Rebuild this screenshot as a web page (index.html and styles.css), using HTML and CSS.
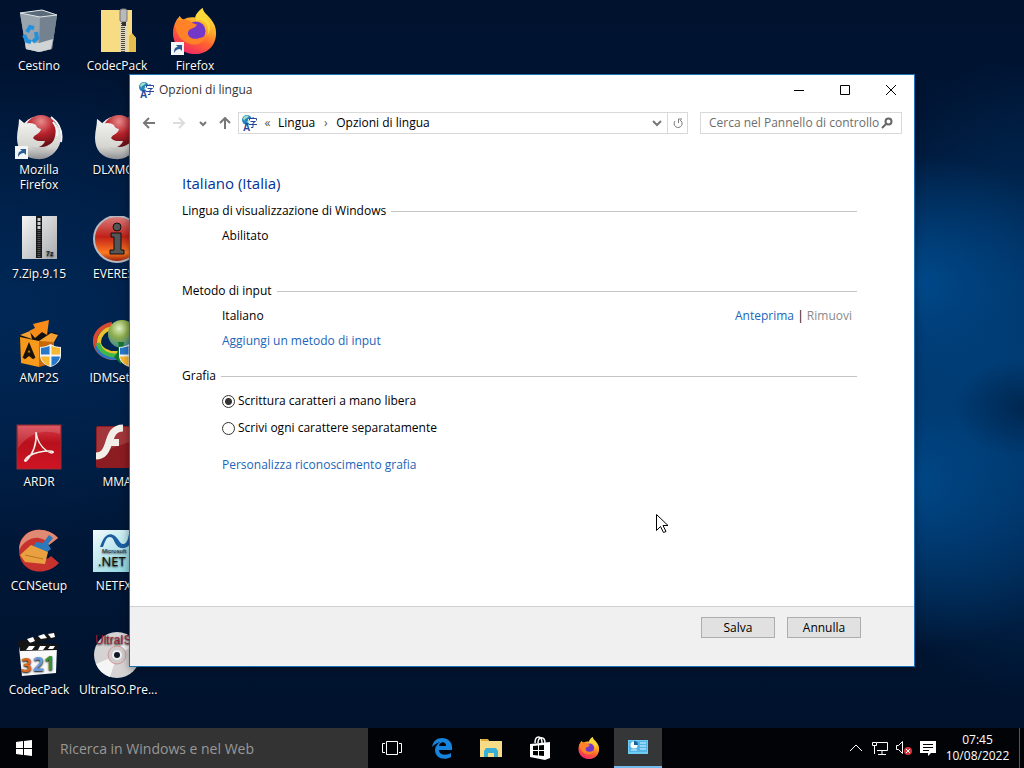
FILE: index.html
```html
<!DOCTYPE html>
<html lang="it">

<head>
    <meta charset="UTF-8">
    <meta name="viewport" content="width=device-width, initial-scale=1.0">
    <title>Opzioni di lingua</title>
    <link rel="stylesheet" href="styles.css">
</head>

<body>
    <!-- shared icons -->
    <svg class="defs" aria-hidden="true">
        <defs>
            <linearGradient id="fox" x1="0.8" y1="0" x2="0.3" y2="1">
                <stop offset="0" stop-color="#fff04a" />
                <stop offset="0.35" stop-color="#ffb02a" />
                <stop offset="0.65" stop-color="#ff6030" />
                <stop offset="1" stop-color="#f0246a" />
            </linearGradient>
            <linearGradient id="silver" x1="0" y1="0" x2="0" y2="1">
                <stop offset="0" stop-color="#f4f4f2" />
                <stop offset="0.7" stop-color="#d4d4d0" />
                <stop offset="1" stop-color="#8e9094" />
            </linearGradient>
            <radialGradient id="redball" cx="0.5" cy="0.2" r="0.8">
                <stop offset="0" stop-color="#e88a8a" />
                <stop offset="0.5" stop-color="#b8222c" />
                <stop offset="1" stop-color="#5e0c12" />
            </radialGradient>
            <linearGradient id="red" x1="0" y1="0" x2="0" y2="1">
                <stop offset="0" stop-color="#d8404c" />
                <stop offset="0.4" stop-color="#b8101c" />
                <stop offset="1" stop-color="#d01424" />
            </linearGradient>
            <linearGradient id="steel" x1="0" y1="0" x2="1" y2="1">
                <stop offset="0" stop-color="#f4f4f4" />
                <stop offset="1" stop-color="#a9adb0" />
            </linearGradient>
            <linearGradient id="fire" x1="0" y1="0" x2="0" y2="1">
                <stop offset="0" stop-color="#d98080" />
                <stop offset="0.45" stop-color="#c02018" />
                <stop offset="0.8" stop-color="#ff7a20" />
                <stop offset="1" stop-color="#8a1408" />
            </linearGradient>
            <radialGradient id="globe" cx="0.4" cy="0.3" r="0.8">
                <stop offset="0" stop-color="#dff0c8" />
                <stop offset="0.4" stop-color="#8fae4a" />
                <stop offset="1" stop-color="#2a7fb4" />
            </radialGradient>
            <linearGradient id="net" x1="0" y1="0" x2="1" y2="1">
                <stop offset="0" stop-color="#f2fbfc" />
                <stop offset="1" stop-color="#7fd0dc" />
            </linearGradient>
            <symbol id="i-firefox" viewBox="0 0 48 48">
                <path d="M5 12c1-1 2-2 3-4 1 2 2 3 4 4 4-2 8-3 12-2 1-4 4-7 8-10 1 5 5 7 8 11 4 5 6 9 6 15 0 13-9 22-22 22S1 39 1 26c0-6 2-10 4-14z" fill="url(#fox)" />
                <circle cx="25" cy="24" r="10" fill="#7438c8" />
                <path d="M3 16c4-4 10-5 14-3 3 1 5 4 9 4-1 4-5 4-8 6-3 3-1 8 4 9 6 1 9-3 13-1-3 5-8 8-14 7C10 36 4 28 3 16z" fill="#ff8228" />
                <path d="M25 14c3-2 5-2 8 0 5 3 6 9 4 15 4-7 3-13-1-18-3-3-5-6-4-11-6 4-8 9-7 14z" fill="#ffd93a" />
            </symbol>
            <!-- old Firefox: silver fox round a red ball -->
            <symbol id="i-mozilla" viewBox="0 0 48 48">
                <circle cx="25" cy="25" r="21" fill="url(#silver)" />
                <circle cx="26" cy="19" r="16" fill="url(#redball)" />
                <path d="M4 7c2 1 4 3 6 5 4-2 8-1 11 1 1 3 2 3 5 4-1 5-6 5-8 9 3 4 8 3 12 3-2 6-9 8-15 5 4 5 12 5 18 1 6-4 9-12 7-22 4 7 6 15 3 22-4 9-13 13-22 12C9 46 2 38 2 26 2 19 4 14 4 7z" fill="url(#silver)" />
                <path d="M36 5c8 6 12 14 10 25M38 10c3 4 5 9 4 14" fill="none" stroke="#f6f6f6" stroke-width="2" />
            </symbol>
            <symbol id="i-shortcut" viewBox="0 0 13 13">
                <path d="M0 0h13v13H0z" fill="#f2f4f6" />
                <path d="M3 11c0-4 1-6 4-6L5 3h6v6L9 7c-3 0-4 1-6 4z" fill="#2b5b94" />
            </symbol>
            <symbol id="i-shield" viewBox="0 0 22 24">
                <path d="M11 0c3 2 7 3 11 3v9c0 6-5 10-11 12C5 22 0 18 0 12V3c4 0 8-1 11-3z" fill="#f5f5f5" />
                <path d="M10 2v9H1V4c3 0 6-1 9-2zM12 13h9c-1 5-4 8-9 10z" fill="#2878c8" />
                <path d="M12 2c3 1 6 2 9 2v7h-9zM1 13h9v10c-5-2-8-5-9-10z" fill="#f8b830" />
            </symbol>
            <symbol id="i-lang" viewBox="0 0 16 16">
                <circle cx="6" cy="5" r="5" fill="#2585bd" />
                <path d="M2 3c2-3 5-3 6-2L6 3 4 4 3 6zM6 6l3-1v3H7z" fill="#a5dfc4" />
                <path d="M7 4h9v8H9z" fill="#fff" />
                <text x="2" y="16" font-family="Liberation Sans" font-size="10" font-weight="bold" fill="#26479a">A</text>
                <path d="M8.5 5.500V3.500h7v2M12 2v1.500M9.500 6.500h5L12 8v4.500h-2M8 9.500h8" fill="none" stroke="#26479a" />
            </symbol>
        </defs>
    </svg>

    <main class="desktop">
        <ul class="icons">
            <li>
                <svg viewBox="0 0 48 48">
                    <path d="M5 5l22-3 15 5-5 34-12 3-14-3z" fill="#8a98a4" />
                    <path d="M5 5l20 4-1 35-13-3z" fill="#98a4ae" />
                    <path d="M25 9l17-2-5 34-13 3z" fill="#74828f" />
                    <path d="M10 33l14 2 14-4-2 10-12 3-13-3z" fill="#d0d4d5" />
                    <path d="M5 5l22-3 15 5-17 2z" fill="#5a6a78" stroke="#dfe5e8" />
                    <path d="M12 24l3-5 4 1M9 27l3 6 4 1M21 24l1 6-4 4" fill="none" stroke="#2490dc" stroke-width="4" />
                </svg>
                <span>Cestino</span>
            </li>
            <li>
                <svg viewBox="0 0 48 48">
                    <path d="M8 2h31v24l4 4v14H8z" fill="#f8dc84" />
                    <path d="M36 44V28l3-3 4 5v14z" fill="#e6bd50" />
                    <path d="M27 2h7v42h-7z" fill="#e0d6b8" />
                    <path d="M30 15v29" stroke="#4d4a44" stroke-width="4" stroke-dasharray="1 1" />
                    <rect x="27" y="1" width="7" height="13" rx="2" fill="#b9b9b9" stroke="#777" />
                    <path d="M29 14h4v4h-4z" fill="#333" />
                </svg>
                <span>CodecPack</span>
            </li>
            <li>
                <svg viewBox="0 0 48 48"><use href="#i-firefox" width="46" height="46" x="1" /><use href="#i-shortcut" x="0" y="34" width="13" height="13" /></svg>
                <span>Firefox</span>
            </li>
            <li>
                <svg viewBox="0 0 48 48"><use href="#i-mozilla" width="48" height="48" /><use href="#i-shortcut" x="0" y="34" width="13" height="13" /></svg>
                <span>Mozilla Firefox</span>
            </li>
            <li>
                <svg viewBox="0 0 48 48"><use href="#i-mozilla" width="48" height="48" /></svg>
                <span>DLXMOZ</span>
            </li>
            <li class="empty"></li>
            <li>
                <svg viewBox="0 0 48 48">
                    <path d="M7 0h35v43H7z" fill="url(#steel)" />
                    <path d="M21 0h6v42h-6z" fill="#181818" />
                    <path d="M24 14v27" stroke="#555" stroke-width="3" stroke-dasharray="1 1" />
                    <path d="M24 2v12" stroke="#ccc" stroke-width="3" stroke-dasharray="3 1" />
                    <text x="31" y="40" font-family="Liberation Sans" font-size="7" font-weight="bold" fill="#222">7z</text>
                </svg>
                <span>7.Zip.9.15</span>
            </li>
            <li>
                <svg viewBox="0 0 48 48">
                    <circle cx="24" cy="23" r="23" fill="url(#fire)" stroke="#b8b8c0" stroke-width="2" />
                    <circle cx="24" cy="11" r="4" fill="#555" stroke="#111" />
                    <path d="M18 17h10v17h3v4H17v-4h4V21h-3z" fill="#555" stroke="#111" />
                </svg>
                <span>EVEREST</span>
            </li>
            <li class="empty"></li>
            <li>
                <svg viewBox="0 0 48 48">
                    <path d="M5 15l8-3 29 1-4 8 2 22-16 4-18-5z" fill="#111" />
                    <path d="M5 17l19 4v26L6 43z" fill="#f79a1c" />
                    <path d="M24 21l15-4v26l-15 4z" fill="#c96808" />
                    <path d="M5 15l10-4 2 8zM24 21l12-8 7 2-4 7z" fill="#f5a030" />
                    <path d="M14 11l6-3-2-4L34 0l-2 15-5-3-7 6z" fill="#f98c18" />
                    <path d="M9 38l5-12 5 12-5-4z" fill="none" stroke="#1a1208" stroke-width="3" />
                    <use href="#i-shield" x="25" y="24" width="21" height="23" />
                </svg>
                <span>AMP2S</span>
            </li>
            <li>
                <svg viewBox="0 0 48 48">
                    <g fill="none" stroke-width="4">
                        <path d="M19 4C8 6 1 14 2 23s10 16 23 15" stroke="#d84a30" />
                        <path d="M20 8C11 9 6 16 6 22s8 12 19 11" stroke="#e8c330" />
                        <path d="M3 26c2 8 11 14 22 12" stroke="#2a79c8" stroke-width="3" />
                        <path d="M5 23c2 9 11 14 21 12" stroke="#40b848" />
                    </g>
                    <circle cx="29" cy="14" r="14" fill="url(#globe)" />
                    <path d="M25 22c2 7-1 12-4 15l7 7 3-22z" fill="#11752c" />
                    <use href="#i-shield" x="26" y="24" width="21" height="23" />
                </svg>
                <span>IDMSetup</span>
            </li>
            <li class="empty"></li>
            <li>
                <svg viewBox="0 0 48 48">
                    <rect x="2" y="1" width="44" height="44" fill="url(#red)" stroke="#8d3038" />
                    <path d="M3 24C13 10 28 4 45 10V2H3z" fill="#fff" opacity="0.15" />
                    <path d="M21 8c1 14-4 23-10 29-2 1-2-2 3-5 7-4 14-5 21-5 6 0 3 4-3 0-6-4-10-11-11-19z" fill="none" stroke="#f4f0e8" stroke-width="1.5" />
                </svg>
                <span>ARDR</span>
            </li>
            <li>
                <svg viewBox="0 0 48 48">
                    <rect x="3" y="2" width="42" height="42" rx="2" fill="#8a1c22" />
                    <path d="M4 3h40v12L4 30z" fill="#b4474b" opacity="0.6" />
                    <path d="M30 4C20 4 18 12 16 18C13 28 10 32 3 32" fill="none" stroke="#f2efe8" stroke-width="7" />
                    <path d="M15 15h11v7H14z" fill="#f2efe8" />
                </svg>
                <span>MMA</span>
            </li>
            <li class="empty"></li>
            <li>
                <svg viewBox="0 0 48 48">
                    <path d="M43 10C30-4 4 0 4 22c0 23 26 28 40 13l-8-7c-7 7-16 3-16-4 0-9 8-11 14-7z" fill="#c8322e" />
                    <path d="M43 10C30-4 5 0 4 22c5-9 13-13 20-12 5 1 8 3 10 7z" fill="#e08a74" />
                    <path d="M34 7l4 3-5 6 3 5-5 4-13-6 3-5 7 1z" fill="#2b78ba" />
                    <path d="M5 27l11-10 17 7-3 12-20-2z" fill="#e8a040" />
                    <path d="M10 27l18 4" stroke="#b87420" />
                </svg>
                <span>CCNSetup</span>
            </li>
            <li>
                <svg viewBox="0 0 48 48">
                    <rect y="2" width="46" height="42" fill="url(#net)" />
                    <path d="M7 19c4-12 9-15 15-11 4 3 5 9 9 8 4-2 4-6 5-10h6c-2 10-8 15-14 14-7-1-6-11-11-11-4 0-5 5-7 10z" fill="#1c5fa0" />
                    <text x="9" y="25" font-family="Liberation Sans" font-size="6" fill="#222">Microsoft</text>
                    <text x="5" y="38" font-family="Open Sans" font-size="13" fill="#111">.NET</text>
                </svg>
                <span>NETFX4</span>
            </li>
            <li class="empty"></li>
            <li>
                <svg viewBox="0 0 48 48">
                    <path d="M2 10L40 0l1 6L4 15z" fill="#151515" />
                    <path d="M12 7l6-2 2 4-5 2zM23 4l6-2 3 4-6 1zM33 2l6-1 1 4-4 1z" fill="#fff" />
                    <path d="M4 15l38-1-1 27-34 3z" fill="#fafafa" />
                    <path d="M3 10l39 2v6L5 19z" fill="#151515" />
                    <path d="M14 14h6l-3 4h-6zM25 14h6l-3 4h-5zM35 14h5l-2 3h-5z" fill="#fff" />
                    <g font-family="Open Sans" font-size="19" font-weight="bold">
                        <text x="6" y="40" fill="#d96820">3</text>
                        <text x="18" y="39" fill="#6898d8">2</text>
                        <text x="29" y="38" fill="#359438">1</text>
                    </g>
                </svg>
                <span>CodecPack</span>
            </li>
            <li>
                <svg viewBox="0 0 48 48">
                    <circle cx="24" cy="23" r="23" fill="#d5d3d4" />
                    <path d="M24 23L3 32a23 23 0 0 0 14 13zM24 23L44 12A23 23 0 0 0 33 2z" fill="#f5f5f5" />
                    <circle cx="24" cy="23" r="9" fill="#cfcbcc" stroke="#d49898" />
                    <circle cx="24" cy="23" r="5" fill="#efefef" />
                    <circle cx="24" cy="23" r="3" fill="#101828" />
                    <text x="2" y="12" font-family="Liberation Sans" font-size="12" fill="#a31c38">UltraISO</text>
                </svg>
                <span>UltraISO.Pre...</span>
            </li>
        </ul>

        <section class="window">
            <header class="titlebar">
                <svg class="lang-icon"><use href="#i-lang" /></svg>
                <h1>Opzioni di lingua</h1>
                <div class="controls">
                    <button aria-label="Riduci a icona"><svg viewBox="0 0 10 10"><path d="M0 5.5h10" /></svg></button>
                    <button aria-label="Ingrandisci"><svg viewBox="0 0 10 10"><path d="M.5.5h9v9h-9z" /></svg></button>
                    <button aria-label="Chiudi"><svg viewBox="0 0 10 10"><path d="M0 0l10 10M10 0L0 10" /></svg></button>
                </div>
            </header>

            <nav class="toolbar">
                <button class="tool" aria-label="Indietro"><svg viewBox="0 0 14 12"><path d="M13 6H2M7 1L2 6l5 5" /></svg></button>
                <button class="tool disabled" aria-label="Avanti" disabled><svg viewBox="0 0 14 12"><path d="M1 6h11M7 1l5 5-5 5" /></svg></button>
                <button class="tool small" aria-label="Percorsi recenti"><svg viewBox="0 0 14 12"><path d="M4 5l3 3 3-3" /></svg></button>
                <button class="tool" aria-label="Su"><svg viewBox="0 0 14 12"><path d="M7 12V1M2 6l5-5 5 5" /></svg></button>
                <div class="address">
                    <svg class="lang-icon"><use href="#i-lang" /></svg>
                    <span class="sep">«</span>
                    <a href="#">Lingua</a>
                    <span class="sep">›</span>
                    <a href="#">Opzioni di lingua</a>
                    <button class="drop" aria-label="Percorsi precedenti"><svg viewBox="0 0 10 10"><path d="M1 3l4 4 4-4" /></svg></button>
                    <button class="refresh" aria-label="Aggiorna"><svg viewBox="0 0 10 10"><path d="M8 3a4 4 0 1 1-5-1M1 1h3.5v4" /></svg></button>
                </div>
                <div class="search">
                    <input type="text" placeholder="Cerca nel Pannello di controllo" aria-label="Cerca nel Pannello di controllo">
                    <svg viewBox="0 0 12 12"><circle cx="7.5" cy="4.5" r="3" /><path d="M5 7l-4 4" /></svg>
                </div>
            </nav>

            <form class="panel">
                <h2>Italiano (Italia)</h2>

                <h3>Lingua di visualizzazione di Windows</h3>
                <p class="row row-last">Abilitato</p>

                <h3>Metodo di input</h3>
                <div class="row split">
                    <span>Italiano</span>
                    <span class="actions"><a href="#">Anteprima</a> <i>|</i> <span class="off">Rimuovi</span></span>
                </div>
                <p class="row add"><a href="#">Aggiungi un metodo di input</a></p>

                <h3>Grafia</h3>
                <label class="radio"><input type="radio" name="grafia" checked>Scrittura caratteri a mano libera</label>
                <label class="radio"><input type="radio" name="grafia">Scrivi ogni carattere separatamente</label>
                <p class="row custom"><a href="#">Personalizza riconoscimento grafia</a></p>
            </form>

            <footer class="buttons">
                <button>Salva</button>
                <button>Annulla</button>
            </footer>
        </section>

        <svg class="cursor" viewBox="0 0 12 19"><path d="M.5.5v16l4-4 3 6 2.5-1-3-6h5z" /></svg>
    </main>

    <footer class="taskbar">
        <button class="task" aria-label="Start">
            <svg viewBox="0 0 16 16"><path d="M0 2l7-1v7H0zM8 1l8-1v8H8zM0 9h7v6l-7-1zM8 9h8v7l-8-1z" fill="#fff" /></svg>
        </button>
        <input class="task-search" type="text" placeholder="Ricerca in Windows e nel Web" aria-label="Ricerca in Windows e nel Web">
        <button class="task" aria-label="Visualizzazione attività">
            <svg class="wide" viewBox="0 0 20 14"><path d="M4.5.5h11v13h-11zM3 2.5H.5v9H3M17 2.5h2.5v9H17" fill="none" stroke="#fff" /></svg>
        </button>
        <div class="apps">
            <button class="task" aria-label="Edge">
                <svg class="big" viewBox="0 0 22 22"><path d="M1 10C2 4 6 1 11 1c6 0 10 4 10 9v3H8c0 5 7 6 12 3v4c-7 4-16 1-16-7 0-3 2-6 5-8-4 1-6 3-8 5zM8 9h7c0-5-6-5-7 0z" fill="#1683dc" /></svg>
            </button>
            <button class="task" aria-label="Esplora file">
                <svg class="big" viewBox="0 0 22 22"><path d="M0 2h8l1 2h13v16H0z" fill="#f7dc87" /><path d="M1 2h7v2H1z" fill="#e0a93c" /><path d="M4 20v-6l2-3h10l2 3v6h-4v-4H8v4z" fill="#38aed6" /></svg>
            </button>
            <button class="task" aria-label="Store">
                <svg class="big" viewBox="0 0 22 24"><path d="M6 7c0-8 7-8 7 0M9 7c0-7 7-7 7 0" fill="none" stroke="#fff" stroke-width="1.5" /><path d="M1 8l20-2v16l-5 2-15-3z" fill="#fff" /><path d="M4 10l5-.5v4.500H4zM10 9.5L15 9v5h-5zM4 15h5v4.500L4 19zM10 15h5v5l-5-.5z" fill="#000" /></svg>
            </button>
            <button class="task" aria-label="Firefox">
                <svg class="big"><use href="#i-firefox" /></svg>
            </button>
            <button class="task active" aria-label="Pannello di controllo">
                <svg class="big" viewBox="0 0 22 22"><path d="M1 4h20v14H1z" fill="#6ecbf2" /><path d="M2 5h18v11H2z" fill="#53b4e6" /><circle cx="7" cy="9" r="3.5" fill="#fff" /><path d="M7 9V5a4 4 0 0 1 4 4z" fill="#17609a" /><path d="M13 7h6M13 10h6M13 13h6M4 14h6" stroke="#d9f4ff" /></svg>
            </button>
        </div>
        <div class="tray">
            <button aria-label="Mostra icone nascoste"><svg viewBox="0 0 16 16"><path d="M2 11l6-6 6 6" /></svg></button>
            <button aria-label="Rete"><svg viewBox="0 0 16 16"><path d="M5 2.5h10.5v8H5M10 11v4M6 14.5h8M.5 2.5h4v3h-4zM2.5 6v8" /></svg></button>
            <button aria-label="Volume"><svg viewBox="0 0 16 16"><path d="M.5 5.5h2l4-4v12l-4-4h-2z" /><circle cx="12" cy="11" r="4" fill="#d4343c" stroke="none" /><path d="M10 9l4 4M14 9l-4 4" /></svg></button>
            <button aria-label="Notifiche"><svg viewBox="0 0 16 16"><path d="M0 1h16v12h-5l-3 3v-3H0z" fill="#fff" stroke="none" /><path d="M3 4.5h10M3 7.5h10M3 10.5h6" stroke="#000" /></svg></button>
        </div>
        <div class="clock"><time>07:45</time><time>10/08/2022</time></div>
    </footer>
</body>

</html>
```
FILE: styles.css
```css
* {
    box-sizing: border-box;
}

body {
    margin: 0;
    height: 100vh;
    display: flex;
    flex-direction: column;
    overflow: hidden;
    font: 12px/16px "Segoe UI", "Open Sans", "Noto Sans", sans-serif;
    color: #000;
}

h1,
h2,
h3,
p,
ul {
    margin: 0;
    padding: 0;
    font-weight: normal;
}

svg {
    display: block;
    flex: none;
}

button {
    padding: 0;
    border: 0;
    background: none;
    font: inherit;
    color: inherit;
}

input {
    margin: 0;
    font: inherit;
}

a {
    color: #1a66b8;
    text-decoration: none;
}

.defs {
    position: absolute;
    width: 0;
    height: 0;
}

/* desktop */
.desktop {
    position: relative;
    flex: 1;
    min-height: 0;
    background:
        radial-gradient(ellipse 70px 50px at 100% 56%, rgba(0, 24, 56, 0.6), transparent),
        radial-gradient(ellipse 180px 130px at 89% 39%, #004a8c, transparent),
        radial-gradient(ellipse 200px 170px at 89% 66%, #004888, transparent),
        radial-gradient(ellipse 200px 320px at 100% 52%, #003a70, transparent),
        radial-gradient(ellipse 360px 240px at 0 42%, #002857, transparent),
        linear-gradient(#00122e, #001c42 50%, #00122c);
}

.icons {
    display: grid;
    grid-template-columns: repeat(3, 78px);
    grid-auto-rows: 104px;
    list-style: none;
    color: #fff;
    line-height: 15px;
    text-align: center;
    text-shadow: 0 1px 2px #000;
}

.icons li {
    display: flex;
    flex-direction: column;
    align-items: center;
    gap: 2px;
    padding: 8px 0 0;
}

.icons svg {
    width: 48px;
    height: 48px;
}

.icons span {
    max-width: 76px;
}

/* window */
.window {
    position: absolute;
    top: 74px;
    right: 109px;
    bottom: 61px;
    left: 129px;
    display: flex;
    flex-direction: column;
    border: 1px solid #1a72b8;
    background: #fff;
    box-shadow: 0 2px 8px rgba(0, 0, 0, 0.4);
}

.titlebar {
    display: flex;
    align-items: center;
    height: 30px;
    padding-left: 8px;
}

.titlebar h1 {
    flex: 1;
    margin-left: 5px;
    font-size: 12px;
    color: #333;
}

.lang-icon {
    width: 16px;
    height: 16px;
}

.controls {
    display: flex;
}

.controls button {
    display: grid;
    place-items: center;
    width: 46px;
    height: 30px;
}

.controls svg {
    width: 10px;
    height: 10px;
    fill: none;
    stroke: #000;
}

.toolbar {
    display: flex;
    align-items: center;
    height: 36px;
    padding: 0 12px 0 6px;
}

.tool {
    display: grid;
    place-items: center;
    width: 26px;
}

.tool + .tool {
    margin-left: 4px;
}

.tool svg {
    width: 14px;
    height: 12px;
    fill: none;
    stroke: #777;
    stroke-width: 2;
}

.tool.small {
    width: 12px;
}

.tool.disabled svg {
    stroke: #ddd;
}

.address,
.search {
    display: flex;
    align-items: center;
    height: 22px;
    border: 1px solid #d9d9d9;
}

.address {
    flex: 1;
    padding-left: 2px;
}

.address a {
    color: #000;
}

.address .sep {
    width: 21px;
    text-align: center;
    color: #555;
}

.drop,
.refresh {
    display: grid;
    place-items: center;
    width: 20px;
    height: 20px;
}

.drop {
    margin-left: auto;
}

.refresh {
    border-left: 1px solid #d9d9d9;
}

.drop svg,
.refresh svg {
    width: 10px;
    height: 10px;
    fill: none;
    stroke: #777;
    stroke-width: 2;
}

.refresh svg {
    transform: scaleX(-1);
    stroke-width: 1;
}

.search {
    width: 202px;
    margin-left: 12px;
    padding: 0 8px;
}

.search input {
    flex: 1;
    min-width: 0;
    padding: 0;
    border: 0;
    outline: 0;
}

.search input::placeholder {
    color: #6d6d6d;
}

.search svg {
    width: 12px;
    height: 12px;
    fill: none;
    stroke: #666;
    stroke-width: 2;
}

.panel {
    flex: 1;
    min-height: 0;
    padding: 31px 57px 0 52px;
}

.panel h2 {
    margin-bottom: 9px;
    font-size: 15px;
    line-height: 22px;
    color: #003399;
}

.panel h3 {
    display: flex;
    align-items: center;
    gap: 5px;
    margin-bottom: 9px;
    font-size: 12px;
}

.panel h3::after {
    content: "";
    flex: 1;
    height: 1px;
    background: #c4c4c4;
}

.row {
    padding-left: 40px;
}

.row-last {
    margin-bottom: 39px;
}

.split {
    display: flex;
    justify-content: space-between;
    margin-bottom: 9px;
}

.actions {
    padding-right: 5px;
}

.actions i {
    font-style: normal;
}

.off {
    color: #8a8a8a;
}

.add {
    margin-bottom: 19px;
}

.radio {
    display: flex;
    align-items: center;
    gap: 3px;
    width: fit-content;
    margin: 0 0 11px 40px;
}

.radio input {
    appearance: none;
    width: 13px;
    height: 13px;
    border: 1px solid #333;
    border-radius: 50%;
    background: #fff;
}

.radio input:checked {
    background: radial-gradient(circle, #333 3px, #fff 4px);
}

.custom {
    margin-top: 21px;
}

.buttons {
    display: flex;
    justify-content: flex-end;
    gap: 12px;
    height: 60px;
    padding: 10px 53px 0 0;
    border-top: 1px solid #d0d0d0;
    background: #f0f0f0;
}

.buttons button {
    width: 74px;
    height: 21px;
    border: 1px solid #adadad;
    background: #e1e1e1;
}

.cursor {
    position: absolute;
    top: 514px;
    left: 656px;
    width: 12px;
    height: 19px;
    fill: #fff;
    stroke: #000;
}

/* taskbar */
.taskbar {
    display: flex;
    align-items: center;
    height: 40px;
    padding-right: 4px;
    background: #020306;
    color: #fff;
}

.task {
    display: grid;
    place-items: center;
    width: 48px;
    height: 40px;
}

.task svg {
    width: 16px;
    height: 16px;
}

.task .wide {
    width: 20px;
    height: 14px;
}

.task .big {
    width: 22px;
    height: 24px;
}

.task.active {
    border-bottom: 2px solid #76b9ed;
    background: #353638;
}

.task-search {
    width: 320px;
    height: 40px;
    padding: 0 12px;
    border: 0;
    background: #333;
    color: #fff;
    font-size: 14px;
}

.task-search::placeholder {
    color: #989898;
}

.apps {
    display: flex;
    gap: 1px;
    margin-left: 2px;
}

.tray {
    display: flex;
    gap: 8px;
    margin-left: auto;
}

.tray svg {
    width: 16px;
    height: 16px;
    fill: none;
    stroke: #fff;
}

.clock {
    display: flex;
    flex-direction: column;
    align-items: center;
    justify-content: center;
    width: 84px;
    height: 40px;
    border-right: 1px solid #555;
}
```
